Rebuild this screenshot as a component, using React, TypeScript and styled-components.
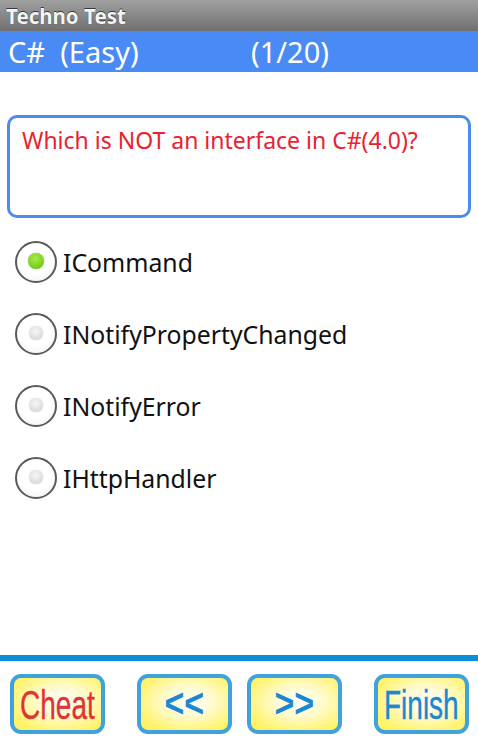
import React from "react";
import styled, { createGlobalStyle } from "styled-components";

const Global = createGlobalStyle`
  html, body { margin: 0; padding: 0; background: #fff; }
  body { width: 478px; height: 754px; overflow: hidden; }
  #root { width: 478px; height: 754px; }
`;

const Screen = styled.div`
  width: 478px;
  height: 754px;
  display: flex;
  flex-direction: column;
  background: #ffffff;
  font-family: "Noto Sans", "Open Sans", sans-serif;
`;

const TitleBar = styled.div`
  height: 31px;
  flex: none;
  background: linear-gradient(#a0a0a0, #707070);
  display: flex;
  align-items: center;
  padding-left: 6px;
  box-sizing: border-box;
  font-family: "Noto Sans", "Open Sans", sans-serif;
  font-weight: 700;
  font-size: 20.5px;
  color: #f4f4f4;
  text-shadow: 0 -1px 0 #3a3a3a, 0 0 1px #444;
`;

const Header = styled.div`
  height: 41px;
  flex: none;
  background: #4a8af4;
  display: flex;
  align-items: center;
  color: #ffffff;
  font-size: 29px;
  white-space: pre;
`;

const HeaderCell = styled.span<{ $w?: number; $pl?: number }>`
  padding-left: ${(p) => p.$pl ?? 0}px;
  width: ${(p) => (p.$w ? `${p.$w}px` : "auto")};
  box-sizing: border-box;
`;

const Content = styled.div`
  flex: 1;
  display: flex;
  flex-direction: column;
  padding: 43px 7px 0 7px;
`;

const QuestionBox = styled.div`
  height: 103px;
  box-sizing: border-box;
  border: 3px solid #4d8af0;
  border-radius: 10px;
  padding: 6px 12px;
  color: #e8222e;
  font-size: 23px;
  line-height: 32px;
`;

const Options = styled.div`
  display: flex;
  flex-direction: column;
  margin-top: 23px;
`;

const Option = styled.div`
  height: 72px;
  display: flex;
  align-items: flex-start;
  gap: 6px;
  padding-left: 8px;
`;

const Radio = styled.div`
  width: 42px;
  height: 42px;
  box-sizing: border-box;
  border-radius: 50%;
  border: 2px solid #5a5a5a;
  background: radial-gradient(circle at 50% 40%, #ffffff 55%, #ececec 100%);
  display: flex;
  align-items: center;
  justify-content: center;
  flex: none;
`;

const Dot = styled.div<{ $on: boolean }>`
  width: ${(p) => (p.$on ? 16 : 14)}px;
  height: ${(p) => (p.$on ? 16 : 14)}px;
  border-radius: 50%;
  margin-top: -2px;
  background: ${(p) =>
    p.$on
      ? "radial-gradient(circle at 45% 35%, #a6ec4a 0%, #7fd422 55%, #5fb318 100%)"
      : "radial-gradient(circle at 45% 35%, #f4f4f4 0%, #e0e0e0 60%, #c8c8c8 100%)"};
  box-shadow: ${(p) => (p.$on ? "0 0 1px #4a8a10" : "0 0 1px #aaa")};
`;

const Label = styled.span`
  font-size: 24.8px;
  color: #111;
  line-height: 43px;
`;

const Divider = styled.div`
  height: 6px;
  flex: none;
  background: #0a90d8;
`;

const ButtonBar = styled.div`
  height: 93px;
  flex: none;
  display: flex;
  align-items: flex-start;
  padding-top: 13px;
  box-sizing: border-box;
`;

const Btn = styled.div<{ $ml: number; $color: string }>`
  margin-left: ${(p) => p.$ml}px;
  width: 95px;
  height: 60px;
  box-sizing: border-box;
  border: 4px solid #3fa2dc;
  border-radius: 11px;
  background: radial-gradient(ellipse at 55% 45%, #ffffff 0%, #fffbd0 35%, #fff36a 80%, #fff060 100%);
  display: flex;
  align-items: center;
  justify-content: center;
  color: ${(p) => p.$color};
  font-family: "Liberation Sans", Arial, sans-serif;
  overflow: hidden;
`;

const BtnText = styled.span`
  display: inline-block;
  font-size: 40px;
  line-height: 40px;
  transform: scaleX(0.7);
  white-space: nowrap;
  margin-top: 1px;
  -webkit-text-stroke: 0.4px currentColor;
`;

const Arrow = styled.span`
  display: inline-block;
  font-size: 40px;
  line-height: 40px;
  font-weight: 700;
  transform: scaleX(0.85);
  white-space: nowrap;
  margin-top: -2px;
`;

const options = ["ICommand", "INotifyPropertyChanged", "INotifyError", "IHttpHandler"];

export default function App() {
  return (
    <>
      <Global />
      <Screen>
        <TitleBar>Techno Test</TitleBar>
        <Header>
          <HeaderCell $pl={8} $w={251}>C#  (Easy)</HeaderCell>
          <HeaderCell>(1/20)</HeaderCell>
        </Header>
        <Content>
          <QuestionBox>Which is NOT an interface in C#(4.0)?</QuestionBox>
          <Options>
            {options.map((o, i) => (
              <Option key={o}>
                <Radio>
                  <Dot $on={i === 0} />
                </Radio>
                <Label>{o}</Label>
              </Option>
            ))}
          </Options>
        </Content>
        <Divider />
        <ButtonBar>
          <Btn $ml={10} $color="#e03434"><BtnText>Cheat</BtnText></Btn>
          <Btn $ml={32} $color="#1c88d0"><Arrow>&lt;&lt;</Arrow></Btn>
          <Btn $ml={15} $color="#1c88d0"><Arrow>&gt;&gt;</Arrow></Btn>
          <Btn $ml={32} $color="#1c88d0"><BtnText>Finish</BtnText></Btn>
        </ButtonBar>
      </Screen>
    </>
  );
}
